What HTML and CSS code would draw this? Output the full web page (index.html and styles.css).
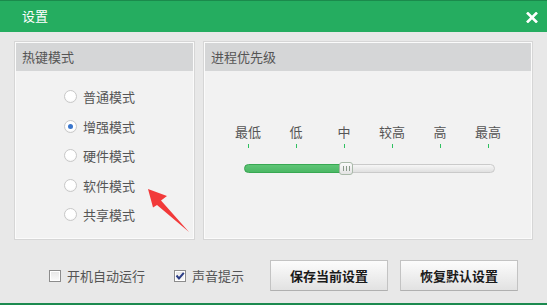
FILE: index.html
```html
<!DOCTYPE html>
<html lang="zh-CN">
<head>
  <meta charset="UTF-8" />
  <title>设置</title>
  <link rel="stylesheet" href="styles.css">
</head>
<body>
  <div class="window">
    <div class="titlebar">
      <span class="title">设置</span>
      <svg class="close" width="12" height="11" viewBox="0 0 12 11">
        <path d="M1 0.5 L11 10.5 M11 0.5 L1 10.5" stroke="#fff" stroke-width="2.6" />
      </svg>
    </div>

    <div class="content">
      <div class="panels">
        <div class="panel hotkey">
          <div class="panel-head">热键模式</div>
          <div class="radios">
            <div class="radio"><span class="dot"></span>普通模式</div>
            <div class="radio"><span class="dot on"></span>增强模式</div>
            <div class="radio"><span class="dot"></span>硬件模式</div>
            <div class="radio"><span class="dot"></span>软件模式</div>
            <div class="radio"><span class="dot"></span>共享模式</div>
          </div>
        </div>

        <div class="panel priority">
          <div class="panel-head">进程优先级</div>
          <div class="scale">
            <div class="labels">
              <span>最低</span><span>低</span><span>中</span><span>较高</span><span>高</span><span>最高</span>
            </div>
            <div class="ticks">
              <i></i><i></i><i></i><i></i><i></i><i></i>
            </div>
            <div class="track">
              <div class="fill"></div>
              <div class="thumb"><b></b><b></b><b></b></div>
            </div>
          </div>
        </div>
      </div>

      <div class="footer">
        <label class="check"><span class="box"></span>开机自动运行</label>
        <label class="check sound">
          <span class="box">
            <svg width="10" height="10" viewBox="0 0 10 10"><path d="M1.5 4.5 L4 7.5 L8.8 1.8" stroke="#2b3d86" stroke-width="2" fill="none" /></svg>
          </span>声音提示
        </label>
        <button class="btn save">保存当前设置</button>
        <button class="btn reset">恢复默认设置</button>
      </div>
    </div>

    <!-- 红色箭头标注 -->
    <svg class="arrow" width="547" height="305" viewBox="0 0 547 305">
      <polygon points="148,189 167,196 161,200.5 189,232 157,205 153,207.5" fill="#f23a3a" />
    </svg>
  </div>
</body>
</html>
```

FILE: styles.css
```css
* { margin: 0; padding: 0; box-sizing: border-box; }
body {
  font-family: "Noto Sans CJK SC", "Noto Sans", sans-serif;
  font-size: 13px;
  color: #555;
  background: #e8e8e8;
}

.window {
  position: relative;
  width: 547px;
  height: 305px;
  background: #e8e8e8;
  border-bottom: 2px solid #1c8a4f;
}

/* 标题栏 */
.titlebar {
  height: 32px;
  background: #25ad60;
  border-top: 1px solid #1b8a4c;
  display: flex;
  align-items: center;
  justify-content: space-between;
  padding: 0 9px 0 22px;
}
.title {
  color: #fff;
  font-size: 13px;
  line-height: 13px;
  margin-top: -3px;
}
.close { display: block; margin-top: 1px; }

.content {
  padding: 10px 15px 0;
}
.panels {
  display: flex;
  gap: 10px;
}
.panel {
  height: 197px;
  background: #f2f2f2;
  border: 1px solid #fbfbfb;
  box-shadow: 0 0 0 1px #d6d6d6;
}
.hotkey { width: 179px; }
.priority { width: 328px; }
.panel-head {
  height: 28px;
  background: #d5d6d7;
  line-height: 28px;
  padding-left: 6px;
  color: #555;
}

/* 单选 */
.radios {
  padding: 11px 0 0 48px;
}
.radio {
  height: 29.5px;
  display: flex;
  align-items: center;
  gap: 6px;
}
.dot {
  width: 13px;
  height: 13px;
  border-radius: 50%;
  border: 1px solid #c8c8c8;
  background: radial-gradient(circle at 50% 40%, #fff 55%, #ececec 100%);
  display: flex;
  align-items: center;
  justify-content: center;
}
.dot.on::after {
  content: '';
  width: 5px;
  height: 5px;
  border-radius: 50%;
  background: #3a76cc;
}

/* 优先级滑块 */
.scale {
  padding: 52px 0 0 19px;
}
.labels, .ticks {
  display: grid;
  grid-template-columns: repeat(6, 48px);
}
.labels span {
  text-align: center;
  line-height: 18px;
}
.ticks { margin-top: 3px; height: 4px; }
.ticks i {
  width: 1px;
  height: 4px;
  background: #2fc060;
  justify-self: center;
}
.track {
  position: relative;
  width: 251px;
  height: 9px;
  margin: 16px 0 0 20px;
  border-radius: 5px;
  background: linear-gradient(#f6f6f6, #e0e0e0);
  border: 1px solid #cacaca;
}
.fill {
  width: 101px;
  height: 9px;
  margin: -1px 0 0 -1px;
  border-radius: 5px 0 0 5px;
  background: linear-gradient(#5ec576, #4cb865);
  border: 1px solid #38a852;
}
.thumb {
  position: absolute;
  left: 94px;
  top: -3px;
  width: 14px;
  height: 13px;
  border-radius: 3px;
  border: 1px solid #a9b9a9;
  background: linear-gradient(#fafafa, #e4e4e4);
  display: flex;
  justify-content: center;
  align-items: center;
  gap: 2px;
}
.thumb b {
  width: 1px;
  height: 5px;
  background: #8a9a8a;
}

/* 底部 */
.footer {
  display: flex;
  align-items: center;
  height: 31px;
  margin-top: 21px;
  padding-left: 34px;
}
.check {
  display: flex;
  align-items: center;
  gap: 6px;
  color: #555;
}
.sound { margin-left: 29px; }
.box {
  width: 12px;
  height: 12px;
  border: 1px solid #8c8c8c;
  background: linear-gradient(#e6e6e6, #fbfbfb);
  box-shadow: inset 0 0 0 1px #fff;
  display: flex;
  align-items: center;
  justify-content: center;
}
.btn {
  width: 118px;
  height: 31px;
  font-family: inherit;
  font-size: 13px;
  font-weight: bold;
  color: #1a1a1a;
  border: 1px solid #c3c3c3;
  border-bottom-color: #b0b0b0;
  background: linear-gradient(#fcfcfc, #e2e2e2);
}
.save { margin-left: 26px; }
.reset { margin-left: 12px; }

.arrow {
  position: absolute;
  left: 0;
  top: 0;
  pointer-events: none;
}
```
